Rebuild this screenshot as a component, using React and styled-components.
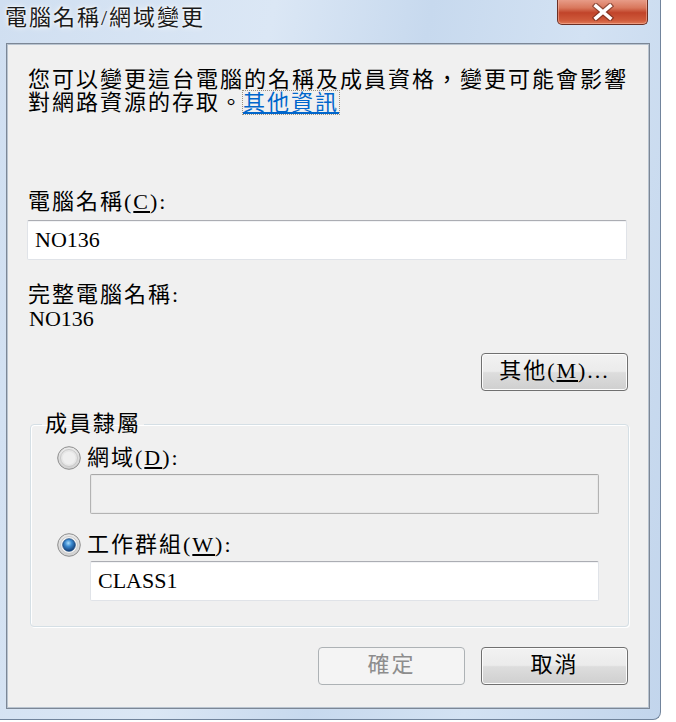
import styled, { createGlobalStyle } from "styled-components";

const uiFont = `"Liberation Serif", "Noto Sans CJK TC", serif`;

const GlobalStyle = createGlobalStyle`
  html, body {
    margin: 0;
    padding: 0;
    background: #ffffff;
  }
  body {
    font-family: ${uiFont};
  }
`;

const Window = styled.div`
  width: 661px;
  height: 720px;
  box-sizing: border-box;
  display: flex;
  flex-direction: column;
  padding: 0 10px 10px 6px;
  background: linear-gradient(
    100deg,
    #d0dff1 0%,
    #dbe7f5 35%,
    #c7d9ee 55%,
    #d3e2f3 75%,
    #c2d5ec 100%
  );
  border-right: 1px solid #71849c;
  border-bottom: 1px solid #71849c;
  border-bottom-right-radius: 8px;
`;

const TitleBar = styled.div`
  height: 43px;
  flex: none;
  display: flex;
  justify-content: space-between;
  align-items: flex-start;
`;

const Title = styled.div`
  margin: 6px 0 0 -1px;
  font-size: 22px;
  line-height: 24px;
  letter-spacing: 2px;
  color: #1b1b1b;
  text-shadow: 0 0 6px #ffffff, 0 0 3px #ffffff;
`;

const CloseButton = styled.div`
  width: 91px;
  height: 26px;
  margin: -1px 2px 0 0;
  box-sizing: border-box;
  display: flex;
  align-items: center;
  justify-content: center;
  border: 1px solid #6b2f24;
  border-top: none;
  border-radius: 0 0 5px 5px;
  background: linear-gradient(
    to bottom,
    #e9a08d 0%,
    #d9785d 35%,
    #c1442a 55%,
    #cf5a3b 85%,
    #e07a58 100%
  );
  box-shadow: inset 0 0 0 1px rgba(255, 200, 180, 0.45);
`;

const Client = styled.div`
  flex: 1;
  box-sizing: border-box;
  display: flex;
  flex-direction: column;
  padding: 24px 22px 0 21px;
  background: #f0f0f0;
  border: 1px solid #7c8796;
  box-shadow: inset 0 0 0 1px #b9c4d0;
  font-size: 22px;
  letter-spacing: 2px;
  color: #000000;
`;

const Paragraph = styled.p`
  margin: 0;
  line-height: 23px;
  white-space: nowrap;
`;

const Link = styled.a`
  color: #0066cc;
  text-decoration: underline;
  outline: 1px dotted #9a8f80;
  outline-offset: -1px;
  margin-left: -2px;
  padding: 0 1px;
`;

const Label = styled.div`
  line-height: 22px;
  margin-top: ${(p) => p.$top || 0}px;
  white-space: nowrap;
`;

const Value = styled.div`
  margin-top: 2px;
  line-height: 22px;
  letter-spacing: 0;
  padding-left: 1px;
`;

const TextBox = styled.div`
  height: 40px;
  box-sizing: border-box;
  display: flex;
  align-items: center;
  padding: 0 7px;
  margin-top: ${(p) => p.$top || 0}px;
  margin-left: ${(p) => p.$left || 0}px;
  margin-right: ${(p) => p.$right || 0}px;
  background: ${(p) => (p.$disabled ? "#f0f0f0" : "#ffffff")};
  border: 1px solid ${(p) => (p.$disabled ? "#b3b3b3" : "#e0e3e8")};
  border-top-color: ${(p) => (p.$disabled ? "#a8a8a8" : "#abadb3")};
  border-radius: 2px;
  box-shadow: ${(p) =>
    p.$disabled ? "inset 0 0 0 1px #e8e8e8" : "inset 0 1px 0 #f2f3f5"};
  font-size: 22px;
  letter-spacing: 0;
`;

const ButtonRow = styled.div`
  display: flex;
  justify-content: flex-end;
  gap: 16px;
  margin-top: ${(p) => p.$top || 0}px;
  margin-right: -1px;
`;

const Button = styled.div`
  width: 147px;
  height: 38px;
  box-sizing: border-box;
  display: flex;
  align-items: center;
  justify-content: center;
  border: 1px solid ${(p) => (p.$disabled ? "#adb2b5" : "#707070")};
  border-radius: 4px;
  background: ${(p) =>
    p.$disabled
      ? "#f4f4f4"
      : "linear-gradient(to bottom, #f2f2f2 0%, #ebebeb 48%, #dddddd 52%, #cfcfcf 100%)"};
  box-shadow: inset 0 0 0 1px ${(p) => (p.$disabled ? "#f4f4f4" : "#fcfcfc")};
  color: ${(p) => (p.$disabled ? "#8d8d8d" : "#000000")};
  font-size: 22px;
  letter-spacing: 2px;
  line-height: 22px;
  padding-bottom: 2px;
`;

const GroupBox = styled.fieldset`
  margin: 22px -2px 0 2px;
  padding: 11px 29px 25px 27px;
  border: 1px solid #d5dfe5;
  border-radius: 4px;
  box-shadow: inset 1px 1px 0 #ffffff, 1px 1px 0 #ffffff;
  min-width: 0;
`;

const Legend = styled.legend`
  margin-left: -16px;
  padding: 0 3px;
  line-height: 22px;
  font-size: 22px;
`;

const RadioRow = styled.label`
  display: flex;
  align-items: center;
  gap: 6px;
  line-height: 22px;
  margin-top: ${(p) => p.$top || 0}px;
  margin-left: -1px;
`;

const RadioIcon = ({ checked }) => (
  <svg width="24" height="24" viewBox="0 0 24 24">
    <defs>
      <radialGradient id="rgFill" cx="50%" cy="35%" r="60%">
        <stop offset="0%" stopColor="#ffffff" />
        <stop offset="100%" stopColor="#d2d2d2" />
      </radialGradient>
      <radialGradient id="rgDot" cx="45%" cy="35%" r="60%">
        <stop offset="0%" stopColor="#a9dcfb" />
        <stop offset="45%" stopColor="#3b8ad0" />
        <stop offset="100%" stopColor="#17457f" />
      </radialGradient>
    </defs>
    <circle cx="12" cy="12" r="11.3" fill="url(#rgFill)" stroke="#8f8f8f" strokeWidth="1" />
    <circle cx="12" cy="12" r="8.5" fill={checked ? "#f4f4f4" : "#e6e6e6"} stroke="#c9c9c9" strokeWidth="1" />
    {checked ? (
      <circle cx="12" cy="12" r="6.3" fill="url(#rgDot)" stroke="#1c4a80" strokeWidth="0.8" />
    ) : (
      <circle cx="12" cy="12" r="6.3" fill="#efefef" />
    )}
  </svg>
);

const CloseIcon = () => (
  <svg width="22" height="18" viewBox="0 0 22 18">
    <path d="M4 3 L18 15 M18 3 L4 15" stroke="#5a2418" strokeWidth="6" strokeLinecap="square" opacity="0.55" />
    <path d="M4 3 L18 15 M18 3 L4 15" stroke="#ffffff" strokeWidth="3.6" strokeLinecap="square" />
  </svg>
);

export default function App() {
  return (
    <>
      <GlobalStyle />
      <Window>
        <TitleBar>
          <Title>電腦名稱/網域變更</Title>
          <CloseButton>
            <CloseIcon />
          </CloseButton>
        </TitleBar>
        <Client>
          <Paragraph>
            您可以變更這台電腦的名稱及成員資格，變更可能會影響
            <br />
            對網路資源的存取。<Link href="#">其他資訊</Link>
          </Paragraph>
          <Label $top={77}>
            電腦名稱(<u>C</u>):
          </Label>
          <TextBox $top={7} $left={-1}>NO136</TextBox>
          <Label $top={24}>完整電腦名稱:</Label>
          <Value>NO136</Value>
          <ButtonRow $top={23}>
            <Button>
              其他(<u>M</u>)...
            </Button>
          </ButtonRow>
          <GroupBox>
            <Legend>成員隸屬</Legend>
            <RadioRow>
              <RadioIcon />
              <span>
                網域(<u>D</u>):
              </span>
            </RadioRow>
            <TextBox $top={4} $left={32} $disabled />
            <RadioRow $top={19}>
              <RadioIcon checked />
              <span>
                工作群組(<u>W</u>):
              </span>
            </RadioRow>
            <TextBox $top={4} $left={32}>CLASS1</TextBox>
          </GroupBox>
          <ButtonRow $top={20}>
            <Button $disabled>確定</Button>
            <Button>取消</Button>
          </ButtonRow>
        </Client>
      </Window>
    </>
  );
}
